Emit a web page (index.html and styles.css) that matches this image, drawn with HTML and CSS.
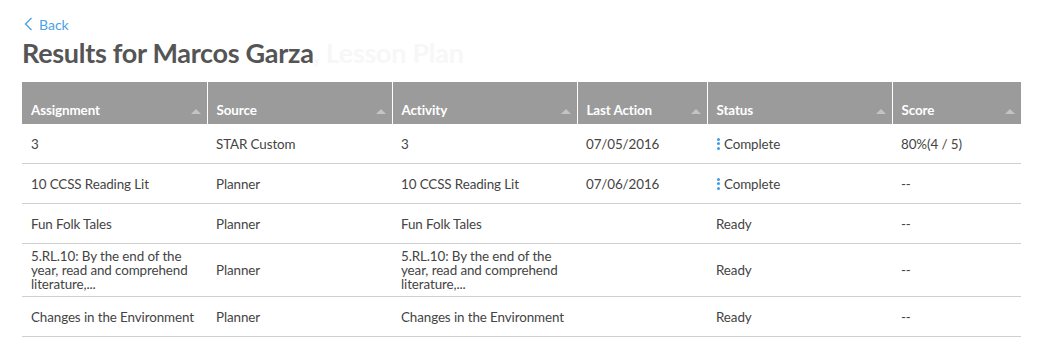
FILE: index.html
```html
<!DOCTYPE html>
<html>
<head>
<meta charset="utf-8">
<link rel="stylesheet" href="styles.css">
</head>
<body>
<div class="page">
  <a class="back" href="#"><svg class="chev" width="9" height="14" viewBox="0 0 9 14"><path d="M7.5 1 L1.5 7 L7.5 13" fill="none" stroke="#4aa3e8" stroke-width="1.4"/></svg><span>Back</span></a>
  <h1 class="title">Results for Marcos Garza<span class="sub">, Lesson Plan</span></h1>
  <table class="results">
    <colgroup>
      <col class="c-wide"><col class="c-wide"><col class="c-wide"><col class="c-narrow"><col class="c-wide"><col class="c-last">
    </colgroup>
    <thead>
      <tr>
        <th><span>Assignment</span><i class="sort"></i></th>
        <th><span>Source</span><i class="sort"></i></th>
        <th><span>Activity</span><i class="sort"></i></th>
        <th><span>Last Action</span><i class="sort"></i></th>
        <th><span>Status</span><i class="sort"></i></th>
        <th><span>Score</span><i class="sort"></i></th>
      </tr>
    </thead>
    <tbody>
      <tr><td>3</td><td>STAR Custom</td><td>3</td><td>07/05/2016</td><td><span class="dots"><i></i><i></i><i></i></span>Complete</td><td>80%(4 / 5)</td></tr>
      <tr><td>10 CCSS Reading Lit</td><td>Planner</td><td>10 CCSS Reading Lit</td><td>07/06/2016</td><td><span class="dots"><i></i><i></i><i></i></span>Complete</td><td>--</td></tr>
      <tr><td>Fun Folk Tales</td><td>Planner</td><td>Fun Folk Tales</td><td></td><td>Ready</td><td>--</td></tr>
      <tr class="tall"><td>5.RL.10: By the end of the year, read and comprehend literature,...</td><td>Planner</td><td>5.RL.10: By the end of the year, read and comprehend literature,...</td><td></td><td>Ready</td><td>--</td></tr>
      <tr><td>Changes in the Environment</td><td>Planner</td><td>Changes in the Environment</td><td></td><td>Ready</td><td>--</td></tr>
    </tbody>
  </table>
</div>
</body>
</html>
```

FILE: styles.css
```css
html, body {
  margin: 0;
  padding: 0;
  background: #fff;
}
body {
  font-family: Lato, "Open Sans", sans-serif;
  color: #444;
}
.page {
  padding: 14px 26px 0 22px;
}
.back {
  display: inline-flex;
  align-items: center;
  gap: 6px;
  color: #4aa3e8;
  text-decoration: none;
  font-size: 14px;
  margin-left: 2px;
  height: 20px;
}
.title {
  margin: 2px 0 12px 0;
  font-size: 27px;
  letter-spacing: -0.3px;
  font-weight: 700;
  color: #555;
  line-height: 34px;
}
.sub {
  color: #f7f7f7;
}
.results {
  width: 999px;
  border-collapse: collapse;
  table-layout: fixed;
  font-size: 13.4px;
  letter-spacing: -0.1px;
}
.c-wide { width: 185px; }
.c-narrow { width: 130px; }
.c-last { width: 129px; }
th {
  background: #9b9b9b;
  color: #fff;
  font-weight: 700;
  text-align: left;
  height: 37px;
  padding: 0 10px 5px 9px;
  vertical-align: bottom;
  border-left: 1px solid #fff;
  position: relative;
  line-height: 18px;
}
th:first-child { border-left: none; }
.sort {
  position: absolute;
  right: 6px;
  bottom: 10px;
  width: 0;
  height: 0;
  border-left: 5px solid transparent;
  border-right: 5px solid transparent;
  border-bottom: 5px solid #c4c4c4;
}
td {
  padding: 0 8px 0 9px;
  height: 39px;
  border-bottom: 1px solid #d0d0d0;
  line-height: 14px;
  vertical-align: middle;
}
tr.tall td { height: 52px; }
.dots {
  display: inline-flex;
  flex-direction: column;
  gap: 1.5px;
  margin-left: 1px;
  margin-right: 4px;
  vertical-align: middle;
  margin-top: -3px;
}
.dots i {
  display: block;
  width: 3px;
  height: 3px;
  border-radius: 50%;
  background: #3d9be9;
}
```
